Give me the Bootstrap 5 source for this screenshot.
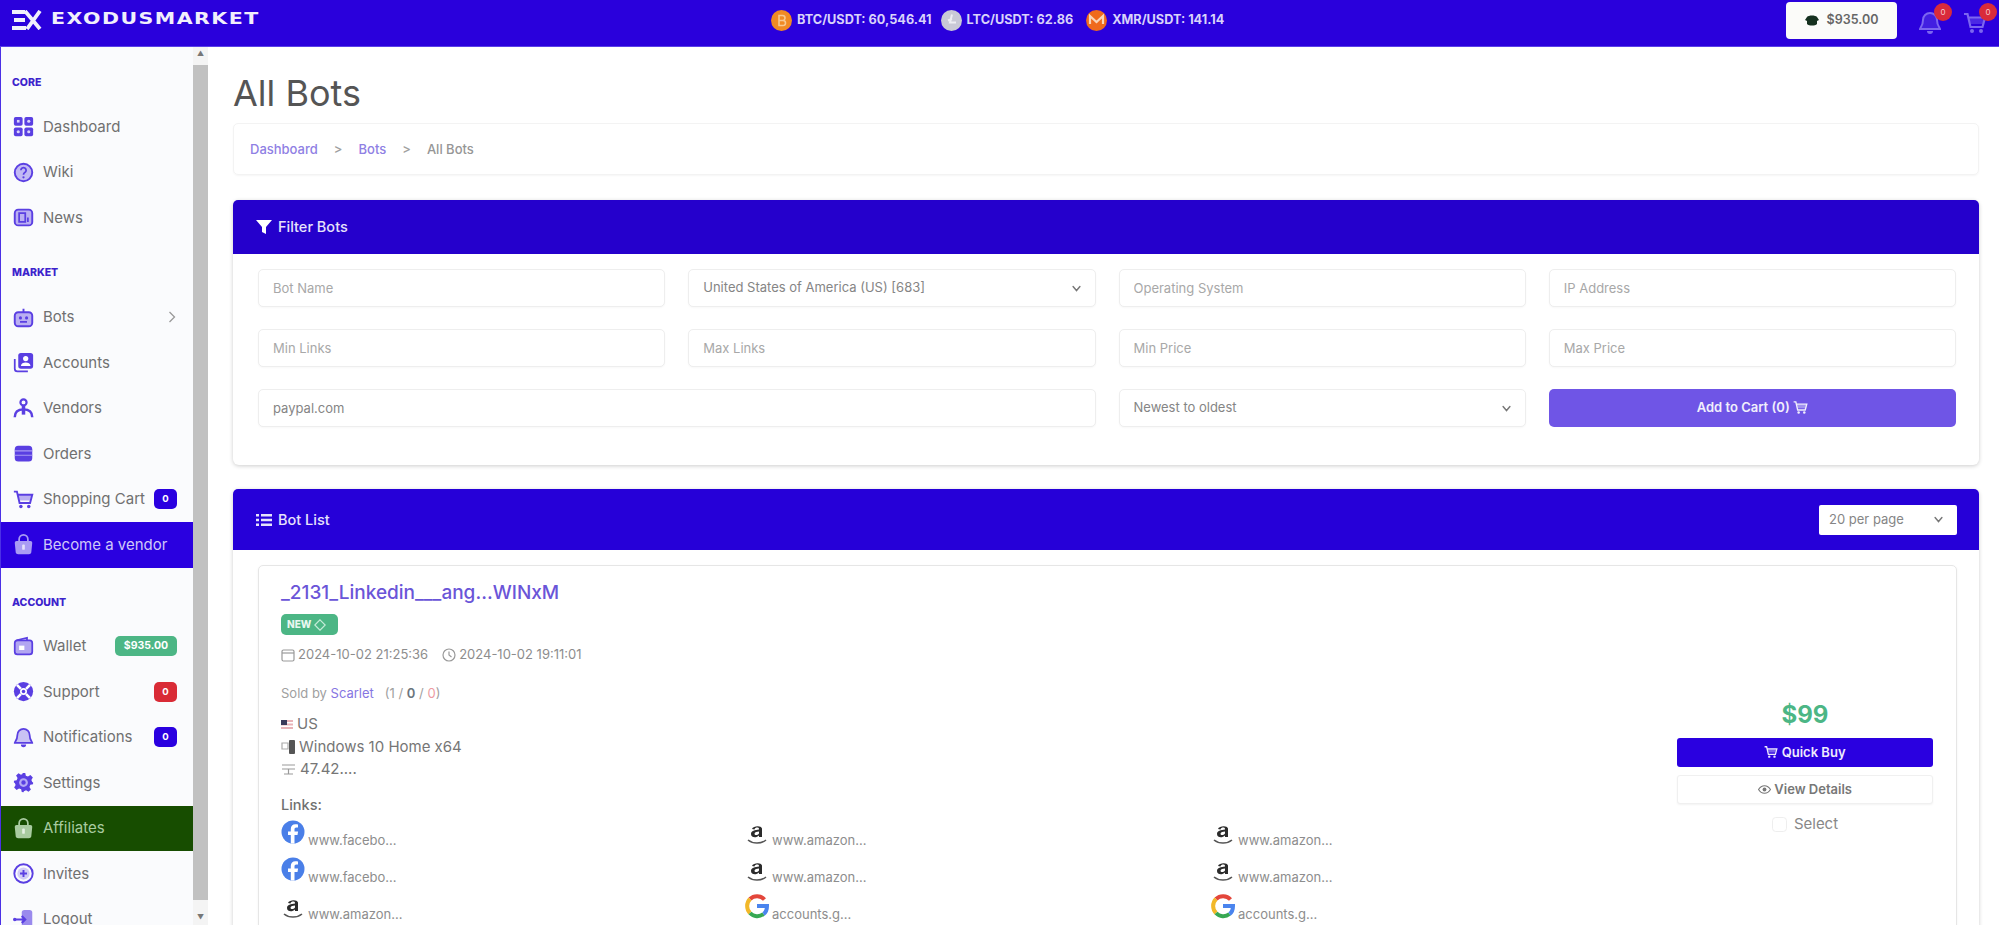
<!DOCTYPE html>
<html lang="en">
<head>
  <meta charset="UTF-8" />
  <meta name="viewport" content="width=device-width, initial-scale=1" />
  <title>All Bots</title>
  <link href="https://cdn.jsdelivr.net/npm/bootstrap@5.3.0/dist/css/bootstrap.min.css" rel="stylesheet" />
  <style>
    html, body { height: 100%; }
    body {
      background: #fff;
      color: #666;
      font-family: Inter, "Liberation Sans", sans-serif;
      overflow: hidden;
    }
    /* top bar */
    .top-bar {
      background: #2a00dc;
      height: 47px;
      padding: 0 12px 6px 11px;
      border-bottom: 1px solid #5a40e8;
      flex-wrap: nowrap;
    }
    .logo-wrap { width: 265px; color: #f1effc; }
    .logo-word {
      font-family: "DejaVu Sans", sans-serif;
      font-weight: 700;
      font-size: 15.5px;
      letter-spacing: 1.1px;
      transform: scaleX(1.325);
      transform-origin: left center;
      margin-left: 8px;
      white-space: nowrap;
    }
    .ticker-wrap { margin-left: 495px; width: 480px; color: #d9d3fa; font-size: 12.7px; font-weight: 700; }
    .ticker-wrap svg { margin-right: 5px; flex: none; }
    .ticker-item { white-space: nowrap; margin-right: 9px; }
    .ticker-item.ticker-mid { margin-right: 13px; }
    .balance-btn {
      margin-left: auto;
      width: 111px;
      height: 37px;
      background: #fbfbf9;
      border: 0;
      border-radius: 4px;
      color: #666;
      font-size: 12.5px;
      font-weight: 600;
      --bs-btn-padding-x: 0;
    }
    .top-icon { width: 24px; height: 24px; margin: 3px 0 0 21px; color: #7c66f0; }
    .top-badge {
      top: -7px;
      right: -10px;
      width: 18px;
      height: 18px;
      background: #d92b3a;
      color: #f6c9cd;
      border-radius: 50%;
      font-size: 8px;
      line-height: 18px;
      text-align: center;
    }
    /* sidebar */
    .app-body { height: calc(100vh - 47px); }
    .side-wrap { width: 208px; flex: none; border-left: 1px solid #4b30e6; overflow: hidden; }
    .side-nav { width: 192px; flex: none; background: #fafbfd; padding-top: 18px; }
    .side-title {
      font-size: 10.5px;
      font-weight: 800;
      color: #3c22cc;
      padding-left: 11px;
      line-height: 36px;
      height: 36px;
      margin-bottom: 3px;
    }
    .side-title.gap-market { margin-top: 14px; margin-bottom: 4px; }
    .side-title.gap-account { margin-top: 17px; margin-bottom: 3px; }
    .side-link {
      height: 45.5px;
      padding: 0 16px 0 12px;
      color: #707070;
      font-size: 15px;
      text-decoration: none;
    }
    .side-link svg.nav-ico { width: 21px; height: 21px; margin-right: 9px; flex: none; color: #5a3fe2; }
    .side-link.is-vendor { background: #2a00e0; color: #cfc8f8; }
    .side-link.is-vendor svg.nav-ico { color: #a99bf4; }
    .side-link.is-affil { background: #174d00; color: #a9cba0; }
    .side-link.is-affil svg.nav-ico { color: #a9cba0; }
    .side-badge {
      background: #2a00e0;
      color: #fff;
      font-size: 9.5px;
      width: 23px;
      height: 20px;
      line-height: 20px;
      padding: 0;
      border-radius: 5px;
    }
    .side-badge.badge-red { background: #d92b36; }
    .side-badge.badge-money { background: #4cb685; width: 62px; font-size: 10.5px; }
    .fake-scroll { width: 15px; flex: none; background: #f4f4f4; }
    .fake-scroll .thumb { background: #c1c1c1; height: 835px; margin-top: 4px; }
    .scroll-arrow { height: 14px; color: #777; font-size: 7px; line-height: 14px; text-align: center; }
    /* main */
    .main-pane { flex: 1; padding: 0 20px 0 25px; overflow: hidden; min-width: 0; }
    .page-heading { font-size: 36px; font-weight: 400; color: #555; margin: 24px 0 8px; line-height: 44px; }
    .crumb-box {
      height: 52px;
      padding: 2px 16px 0;
      border: 1px solid #f3f3f3;
      border-radius: 5px;
      font-size: 13px;
      --bs-breadcrumb-divider: '>';
      --bs-breadcrumb-divider-color: #a0a0a0;
      --bs-breadcrumb-item-active-color: #969696;
      --bs-breadcrumb-margin-bottom: 25px;
      --bs-breadcrumb-item-padding-x: 16px;
      box-shadow: 0 1px 2px rgba(0,0,0,.04);
      font-weight: 500;
    }
    .crumb-box a { color: #8f80e4; text-decoration: none; }
    .panel {
      border: 0;
      border-radius: 6px;
      box-shadow: 0 1px 4px rgba(0,0,0,.2);
      margin-bottom: 24px;
    }
    .panel .card-header {
      background: #2500cc;
      color: #e6e2fb;
      border: 0;
      font-size: 14.5px;
      font-weight: 500;
      height: 54px;
      padding: 0 23px;
    }
    .panel .card-header svg { margin-right: 6px; }
    .panel.list-panel .card-header { background: #2600d8; height: 61px; padding-right: 22px; }
    .filter-body { padding: 15px 23px 38px 25px; }
    .filter-grid { --bs-gutter-x: 23px; --bs-gutter-y: 22px; }
    .field {
      height: 38px;
      font-size: 13px;
      color: #858585;
      border-color: #eee;
      border-radius: 5px;
      padding-left: 14px;
      box-shadow: 0 1px 2px rgba(0,0,0,.03);
    }
    .field::placeholder { color: #a8a8a8; }
    .form-select.field, .form-select.per-page {
      background-image: url("data:image/svg+xml,%3csvg xmlns='http://www.w3.org/2000/svg' viewBox='0 0 16 16'%3e%3cpath fill='none' stroke='%23777' stroke-linecap='round' stroke-width='2' d='m3 5 5 6 5-6'/%3e%3c/svg%3e");
      background-size: 13px 11px;
    }
    .add-cart {
      height: 38px;
      background: #6f55e6;
      color: #f1effc;
      font-size: 13px;
      font-weight: 600;
      border: 0;
      border-radius: 5px;
    }
    .per-page {
      width: 138px;
      height: 30px;
      font-size: 13px;
      color: #858585;
      border: 0;
      border-radius: 2px;
      padding: 0 0 0 10px;
    }
    .list-body { padding: 15px 22px 0 25px; }
    .bot-row {
      border: 1px solid #e6e6e6;
      border-radius: 5px;
      padding: 12px 23px 0 22px;
      box-shadow: 0 1px 3px rgba(0,0,0,.05);
    }
    .bot-name { font-size: 19px; font-weight: 500; color: #6a55d8; text-decoration: none; line-height: 30px; display: block; }
    .new-tag {
      background: #4cb685;
      color: #e9f7f0;
      font-size: 10px;
      font-weight: 800;
      border-radius: 5px;
      padding: 0 6px;
      height: 21px;
      width: 57px;
      margin-top: 6px;
      gap: 3px;
    }
    .date-line { font-size: 13px; color: #8d8d8d; margin-top: 10px; line-height: 19px; }
    .date-line svg { margin-right: 3px; }
    .date-line .date-b { margin-left: 14px; }
    .sold-line { font-size: 13px; color: #a0a0a0; margin-top: 20px; line-height: 18px; }
    .sold-line a { color: #8676e2; text-decoration: none; }
    .spec-list { font-size: 15px; color: #767676; margin-top: 11px; }
    .spec-list > div { height: 22.5px; }
    .spec-list svg { margin-right: 4px; flex: none; }
    .links-label { font-size: 14.5px; font-weight: 500; color: #707070; margin-top: 13px; line-height: 22px; }
    .link-grid { display: grid; grid-template-columns: 464px 466px 466px; grid-auto-rows: 37px; margin-top: 3px; }
    .link-cell { font-size: 13px; color: #8d8d8d; align-items: flex-end; padding-bottom: 5px; white-space: nowrap; }
    .link-cell svg { width: 24px; height: 26px; margin-right: 3px; margin-bottom: 5px; flex: none; }
    .buy-col { width: 256px; flex: none; margin: 120px 0 0; text-align: center; }
    .price-tag { font-size: 24px; font-weight: 700; color: #4cb685; line-height: 34px; }
    .quick-btn {
      background: #2a00e0;
      color: #eeeafd;
      border: 0;
      height: 29px;
      width: 100%;
      font-size: 13px;
      font-weight: 600;
      padding: 0;
      border-radius: 3px;
      margin-top: 6px;
    }
    .detail-btn {
      background: #fff;
      color: #777;
      border: 1px solid #f0f0f0;
      height: 29px;
      width: 100%;
      font-size: 13px;
      font-weight: 600;
      padding: 0;
      border-radius: 3px;
      margin-top: 8px;
      box-shadow: 0 1px 2px rgba(0,0,0,.05);
    }
    .pick-line { font-size: 15px; color: #888; margin: 9px 0 0; padding: 0; gap: 7px; min-height: 0; }
    .pick-line .form-check-input { margin: 0; width: 15px; height: 15px; float: none; border-color: #eee; }
  </style>
</head>
<body>

  <svg width="0" height="0" class="position-absolute">
    <symbol id="ic-dash" viewBox="0 0 24 24"><rect x="1" y="1" width="10" height="10" rx="2" fill="currentColor"/><rect x="13" y="1" width="10" height="10" rx="2" fill="currentColor"/><rect x="1" y="13" width="10" height="10" rx="2" fill="currentColor"/><rect x="13" y="13" width="10" height="10" rx="2" fill="currentColor"/><rect x="4.500" y="4.500" width="3" height="3" fill="#d9d3fa"/><circle cx="18" cy="6" r="1.800" fill="#d9d3fa"/><circle cx="6" cy="18" r="1.800" fill="#d9d3fa"/><circle cx="18" cy="18" r="1.800" fill="#d9d3fa"/></symbol>
    <symbol id="ic-help" viewBox="0 0 24 24"><circle cx="12" cy="12" r="10" fill="currentColor" opacity=".35"/><circle cx="12" cy="12" r="10" fill="none" stroke="currentColor" stroke-width="2.200"/><path d="M9 9.500a3 3 0 1 1 4.500 2.600c-1 .6-1.500 1.200-1.500 2.400" fill="none" stroke="currentColor" stroke-width="2"/><circle cx="12" cy="17.500" r="1.300" fill="currentColor"/></symbol>
    <symbol id="ic-news" viewBox="0 0 24 24"><rect x="2" y="3" width="20" height="18" rx="4" fill="currentColor" opacity=".4"/><rect x="2" y="3" width="20" height="18" rx="4" fill="none" stroke="currentColor" stroke-width="2.200"/><path d="M7 7h7v10H7zM17 12v5" fill="none" stroke="currentColor" stroke-width="2"/></symbol>
    <symbol id="ic-bot" viewBox="0 0 24 24"><rect x="2" y="6" width="20" height="16" rx="4" fill="currentColor" opacity=".4"/><rect x="2" y="6" width="20" height="16" rx="4" fill="none" stroke="currentColor" stroke-width="2.200"/><path d="M12 6V2" stroke="currentColor" stroke-width="2.200"/><circle cx="8.500" cy="12.500" r="1.800" fill="currentColor"/><circle cx="15.500" cy="12.500" r="1.800" fill="currentColor"/><path d="M8 17h8" stroke="currentColor" stroke-width="2"/></symbol>
    <symbol id="ic-acct" viewBox="0 0 24 24"><path d="M2 8v11a3 3 0 0 0 3 3h12" fill="none" stroke="currentColor" stroke-width="2"/><rect x="6" y="1" width="17" height="18" rx="3" fill="currentColor"/><circle cx="14.500" cy="7.500" r="3" fill="#fff"/><path d="M9 16c.5-3 2.500-4 5.500-4s5 1 5.500 4z" fill="#fff"/></symbol>
    <symbol id="ic-vendor" viewBox="0 0 24 24"><circle cx="12" cy="5" r="3.500" fill="none" stroke="currentColor" stroke-width="2.500"/><path d="M12 9v10" stroke="currentColor" stroke-width="4"/><path d="M2 22c0-6 3-9 10-9s10 3 10 9" fill="none" stroke="currentColor" stroke-width="2.800"/></symbol>
    <symbol id="ic-orders" viewBox="0 0 24 24"><rect x="2" y="3" width="20" height="18" rx="4" fill="currentColor"/><path d="M2 9h20M2 14h20" stroke="#a99bf4" stroke-width="1.200"/></symbol>
    <symbol id="ic-cart" viewBox="0 0 24 24"><path d="M1 3h3.500l3 13h12l2.500-9.500H6" fill="none" stroke="currentColor" stroke-width="2.200"/><path d="M6 7h15l-1.500 6H7.500z" fill="currentColor" opacity=".4"/><circle cx="9" cy="20" r="2" fill="currentColor"/><circle cx="18" cy="20" r="2" fill="currentColor"/></symbol>
    <symbol id="ic-bag" viewBox="0 0 24 24"><path d="M7 8V6a5 5 0 0 1 10 0v2" fill="none" stroke="currentColor" stroke-width="2"/><path d="M4 8h16a2 2 0 0 1 2 2l-1 10a3 3 0 0 1-3 3H6a3 3 0 0 1-3-3L2 10a2 2 0 0 1 2-2z" fill="currentColor"/><rect x="10.500" y="12" width="3" height="6" rx="1" fill="#fff" opacity=".7"/></symbol>
    <symbol id="ic-wallet" viewBox="0 0 24 24"><rect x="2" y="5" width="20" height="16" rx="3" fill="currentColor" opacity=".45"/><rect x="2" y="5" width="20" height="16" rx="3" fill="none" stroke="currentColor" stroke-width="2"/><path d="M4 5l12-3v3" fill="none" stroke="currentColor" stroke-width="2"/><path d="M7 11h6v5H7z" fill="#fff"/></symbol>
    <symbol id="ic-support" viewBox="0 0 24 24"><circle cx="12" cy="12" r="11" fill="currentColor"/><circle cx="12" cy="12" r="4" fill="#fff"/><circle cx="12" cy="12" r="2" fill="currentColor"/><path d="M4.500 4.500l4.500 4.500M19.500 4.500L15 9M4.500 19.500L9 15M19.500 19.500L15 15" stroke="#fff" stroke-width="3"/></symbol>
    <symbol id="ic-bell" viewBox="0 0 24 24"><path d="M12 2a7 7 0 0 0-7 7c0 6-3 8-3 9h20c0-1-3-3-3-9a7 7 0 0 0-7-7z" fill="currentColor" opacity=".3"/><path d="M12 2a7 7 0 0 0-7 7c0 6-3 8-3 9h20c0-1-3-3-3-9a7 7 0 0 0-7-7z" fill="none" stroke="currentColor" stroke-width="2"/><path d="M9 20a3 3 0 0 0 6 0z" fill="currentColor"/></symbol>
    <symbol id="ic-gear" viewBox="0 0 24 24"><path d="M10 1h4l.7 3.200 2.400 1 2.800-1.700 2.800 2.800-1.700 2.800 1 2.400L23 12l-.1 2-3.100.7-1 2.400 1.700 2.800-2.800 2.800-2.800-1.700-2.400 1L12 23l-2-.1-.7-3.100-2.400-1-2.800 1.700-2.800-2.800 1.700-2.800-1-2.400L1 12l.1-2 3.100-.7 1-2.400-1.700-2.800 2.800-2.800 2.800 1.700 2.400-1z" fill="currentColor"/><circle cx="12" cy="12" r="5" fill="#b5a9f5"/><circle cx="12" cy="12" r="2.500" fill="currentColor"/></symbol>
    <symbol id="ic-plus" viewBox="0 0 24 24"><circle cx="12" cy="12" r="10.500" fill="none" stroke="currentColor" stroke-width="2.200"/><circle cx="12" cy="12" r="7" fill="currentColor" opacity=".25"/><path d="M12 8v8M8 12h8" stroke="currentColor" stroke-width="2.200"/></symbol>
    <symbol id="ic-logout" viewBox="0 0 24 24"><rect x="10" y="1" width="12" height="22" rx="3" fill="currentColor" opacity=".6"/><path d="M1 12h13M10 8l4 4-4 4" fill="none" stroke="currentColor" stroke-width="2.400"/><circle cx="2" cy="12" r="2" fill="currentColor"/></symbol>
    <symbol id="ic-fb" viewBox="0 0 24 26"><circle cx="12" cy="12" r="11.500" fill="#4a7fe8"/><path d="M13.500 23.500V15h3l.6-3.500h-3.600V9.300c0-1 .5-1.900 2-1.900H17V4.500c-.8-.1-1.700-.2-2.600-.2-2.800 0-4.600 1.700-4.600 4.700v2.500H7V15h2.800v8.500z" fill="#fff"/></symbol>
    <symbol id="ic-goog" viewBox="0 0 24 26"><path d="M19.500 5.500A10 10 0 0 0 5 5" fill="none" stroke="#e3463b" stroke-width="4"/><path d="M5 5a10 10 0 0 0 0 14" fill="none" stroke="#f2b829" stroke-width="4"/><path d="M5 19a10 10 0 0 0 13.500 1" fill="none" stroke="#37a853" stroke-width="4"/><path d="M12 12h10c0 3.500-1 6.300-3.500 8" fill="none" stroke="#4a84ee" stroke-width="4"/></symbol>
    <symbol id="ic-smile" viewBox="0 0 24 26"><path d="M3 20c5 4 13 4 18 0" fill="none" stroke="#555" stroke-width="1.600"/><path d="M7 9c1-3 9-4 10-.5V17h-3v-1.500c-3 3-8 2-8-1.500 0-3.500 4-4 8-4.500V9c0-2-4-2-4.500.5zM14 11.500c-2 .3-4.500.6-4.500 2.300 0 1.700 3 1.700 4.500-.3z" fill="#2b2b2b"/></symbol>
    <symbol id="ic-eye" viewBox="0 0 24 24"><path d="M1 12c3-5 7-7 11-7s8 2 11 7c-3 5-7 7-11 7s-8-2-11-7z" fill="none" stroke="currentColor" stroke-width="2"/><circle cx="12" cy="12" r="3.500" fill="currentColor"/></symbol>
  </svg>

  <nav class="navbar top-bar align-items-center justify-content-start">
    <div class="logo-wrap d-flex align-items-center">
      <svg width="32" height="20" viewBox="0 0 32 20" fill="none" stroke="currentColor" stroke-width="3.800"><path d="M1 2h13M3 10h11M1 18h14"/><path d="M14 1l15 18M29 1L16 19"/></svg>
      <span class="logo-word">EXODUSMARKET</span>
    </div>
    <div class="ticker-wrap d-flex align-items-center">
      <svg width="21" height="21" viewBox="0 0 21 21"><circle cx="10.500" cy="10.500" r="10.500" fill="#f08a24"/><path d="M8 5.500h3.500a2.500 2.500 0 0 1 0 5H8zM8 10.500h4a2.500 2.500 0 0 1 0 5H8z" fill="none" stroke="#f7c88f" stroke-width="1.600"/></svg>
      <span class="ticker-item">BTC/USDT: 60,546.41</span>
      <svg width="21" height="21" viewBox="0 0 21 21"><circle cx="10.500" cy="10.500" r="10.500" fill="#c9c9d6"/><path d="M11 4.500l-2 8h6M7 10.500l4-1.500" fill="none" stroke="#eeeef3" stroke-width="2"/></svg>
      <span class="ticker-item ticker-mid">LTC/USDT: 62.86</span>
      <svg width="21" height="21" viewBox="0 0 21 21"><circle cx="10.500" cy="10.500" r="10.500" fill="#ef6a1c"/><path d="M4 14V6l6.500 6L17 6v8" fill="none" stroke="#f8d5b8" stroke-width="2.200"/></svg>
      <span class="ticker-item">XMR/USDT: 141.14</span>
    </div>
    <button class="btn balance-btn d-flex align-items-center justify-content-center" type="button">
      <svg class="me-2" width="14" height="11" viewBox="0 0 14 11"><path d="M2 2c1.500-2 8.500-2 10 0l2 3-2 1v3c-2 2-8 2-10 0V6L0 5z" fill="#15301f"/></svg>
      $935.00
    </button>
    <span class="top-icon position-relative"><svg width="24" height="24"><use href="#ic-bell"/></svg><span class="top-badge position-absolute">0</span></span>
    <span class="top-icon position-relative"><svg width="24" height="24"><use href="#ic-cart"/></svg><span class="top-badge position-absolute">0</span></span>
  </nav>

  <div class="app-body d-flex">
    <aside class="side-wrap d-flex">
      <div class="side-nav">
        <div class="side-title">CORE</div>
        <a class="side-link d-flex align-items-center" href="#"><svg class="nav-ico"><use href="#ic-dash"/></svg>Dashboard</a>
        <a class="side-link d-flex align-items-center" href="#"><svg class="nav-ico"><use href="#ic-help"/></svg>Wiki</a>
        <a class="side-link d-flex align-items-center" href="#"><svg class="nav-ico"><use href="#ic-news"/></svg>News</a>
        <div class="side-title gap-market">MARKET</div>
        <a class="side-link d-flex align-items-center" href="#"><svg class="nav-ico"><use href="#ic-bot"/></svg>Bots
          <svg class="ms-auto" width="9" height="12" viewBox="0 0 9 12" fill="none" stroke="#999" stroke-width="1.300"><path d="M1.500 1l5 5-5 5"/></svg></a>
        <a class="side-link d-flex align-items-center" href="#"><svg class="nav-ico"><use href="#ic-acct"/></svg>Accounts</a>
        <a class="side-link d-flex align-items-center" href="#"><svg class="nav-ico"><use href="#ic-vendor"/></svg>Vendors</a>
        <a class="side-link d-flex align-items-center" href="#"><svg class="nav-ico"><use href="#ic-orders"/></svg>Orders</a>
        <a class="side-link d-flex align-items-center" href="#"><svg class="nav-ico"><use href="#ic-cart"/></svg>Shopping Cart<span class="badge side-badge ms-auto">0</span></a>
        <a class="side-link is-vendor d-flex align-items-center" href="#"><svg class="nav-ico"><use href="#ic-bag"/></svg>Become a vendor</a>
        <div class="side-title gap-account">ACCOUNT</div>
        <a class="side-link d-flex align-items-center" href="#"><svg class="nav-ico"><use href="#ic-wallet"/></svg>Wallet<span class="badge side-badge badge-money ms-auto">$935.00</span></a>
        <a class="side-link d-flex align-items-center" href="#"><svg class="nav-ico"><use href="#ic-support"/></svg>Support<span class="badge side-badge badge-red ms-auto">0</span></a>
        <a class="side-link d-flex align-items-center" href="#"><svg class="nav-ico"><use href="#ic-bell"/></svg>Notifications<span class="badge side-badge ms-auto">0</span></a>
        <a class="side-link d-flex align-items-center" href="#"><svg class="nav-ico"><use href="#ic-gear"/></svg>Settings</a>
        <a class="side-link is-affil d-flex align-items-center" href="#"><svg class="nav-ico"><use href="#ic-bag"/></svg>Affiliates</a>
        <a class="side-link d-flex align-items-center" href="#"><svg class="nav-ico"><use href="#ic-plus"/></svg>Invites</a>
        <a class="side-link d-flex align-items-center" href="#"><svg class="nav-ico"><use href="#ic-logout"/></svg>Logout</a>
      </div>
      <div class="fake-scroll d-flex flex-column">
        <div class="scroll-arrow">&#9650;</div>
        <div class="thumb"></div>
        <div class="scroll-arrow mt-auto">&#9660;</div>
      </div>
    </aside>

    <main class="main-pane">
      <h1 class="page-heading">All Bots</h1>
      <ol class="breadcrumb crumb-box align-items-center">
        <li class="breadcrumb-item"><a href="#">Dashboard</a></li>
        <li class="breadcrumb-item"><a href="#">Bots</a></li>
        <li class="breadcrumb-item active">All Bots</li>
      </ol>

      <div class="card panel">
        <div class="card-header d-flex align-items-center">
          <svg width="16" height="14" viewBox="0 0 16 14"><path d="M0 0h16l-6 7v7l-4-2V7z" fill="#fff"/></svg>
          Filter Bots
        </div>
        <div class="card-body filter-body">
          <div class="row filter-grid">
            <div class="col-3"><input class="form-control field" placeholder="Bot Name" /></div>
            <div class="col-3"><select class="form-select field"><option>United States of America (US) [683]</option></select></div>
            <div class="col-3"><input class="form-control field" placeholder="Operating System" /></div>
            <div class="col-3"><input class="form-control field" placeholder="IP Address" /></div>
            <div class="col-3"><input class="form-control field" placeholder="Min Links" /></div>
            <div class="col-3"><input class="form-control field" placeholder="Max Links" /></div>
            <div class="col-3"><input class="form-control field" placeholder="Min Price" /></div>
            <div class="col-3"><input class="form-control field" placeholder="Max Price" /></div>
            <div class="col-6"><input class="form-control field" value="paypal.com" /></div>
            <div class="col-3"><select class="form-select field"><option>Newest to oldest</option></select></div>
            <div class="col-3"><button class="btn add-cart w-100" type="button">Add to Cart (0)
              <svg width="15" height="15" style="vertical-align:-3px;margin:0"><use href="#ic-cart"/></svg></button></div>
          </div>
        </div>
      </div>

      <div class="card panel list-panel">
        <div class="card-header d-flex align-items-center justify-content-between">
          <span class="d-flex align-items-center">
            <svg width="16" height="14" viewBox="0 0 16 14" fill="#e6e2fb"><path d="M0 1h3v2.500H0zM5 1h11v2.500H5zM0 5.800h3v2.500H0zM5 5.800h11v2.500H5zM0 10.500h3V13H0zM5 10.500h11V13H5z"/></svg>
            Bot List
          </span>
          <select class="form-select per-page"><option>20 per page</option></select>
        </div>
        <div class="card-body list-body">
          <div class="bot-row d-flex">
            <div class="flex-grow-1">
              <a class="bot-name" href="#">_2131_Linkedin___ang...WINxM</a>
              <div class="new-tag d-flex align-items-center">NEW
                <svg width="12" height="12" viewBox="0 0 12 12" fill="none" stroke="#c5ecd9" stroke-width="1.200"><path d="M6 .8L11.200 6 6 11.200.8 6z"/></svg></div>
              <div class="date-line d-flex align-items-center">
                <svg width="14" height="14" viewBox="0 0 14 14" fill="none" stroke="#999" stroke-width="1.200"><rect x="1" y="2" width="12" height="11" rx="1.500"/><path d="M1 5h12"/></svg>2024-10-02 21:25:36
                <svg class="date-b" width="14" height="14" viewBox="0 0 14 14" fill="none" stroke="#999" stroke-width="1.200"><circle cx="7" cy="7" r="6"/><path d="M7 3.500V7l2.500 2"/></svg>2024-10-02 19:11:01
              </div>
              <div class="sold-line">Sold by <a href="#">Scarlet</a> &nbsp; (1 / <b class="fw-semibold text-secondary">0</b> / <span class="text-danger opacity-50">0</span>)</div>
              <div class="spec-list">
                <div class="d-flex align-items-center"><svg width="12" height="9" viewBox="0 0 12 9"><rect width="12" height="9" fill="#e9b3b8"/><rect y="2" width="12" height="1.500" fill="#fff"/><rect y="5.500" width="12" height="1.500" fill="#fff"/><rect width="6" height="5" fill="#3a3a5a"/></svg>US</div>
                <div class="d-flex align-items-center"><svg width="16" height="14" viewBox="0 0 16 14" style="margin-right:2px"><path d="M1 3h6v6H1z" fill="none" stroke="#aaa" stroke-width="1.200"/><rect x="8" y="0" width="6" height="14" rx="1" fill="#555"/></svg>Windows 10 Home x64</div>
                <div class="d-flex align-items-center"><svg width="15" height="13" viewBox="0 0 15 13" fill="none" stroke="#999" stroke-width="1.200"><path d="M1 2h13M1 6h13M7.500 6v5M3 11h9"/></svg>47.42....</div>
              </div>
              <div class="links-label">Links:</div>
              <div class="link-grid">
                <div class="link-cell d-flex"><svg><use href="#ic-fb"/></svg>www.facebo...</div>
                <div class="link-cell d-flex"><svg><use href="#ic-smile"/></svg>www.amazon...</div>
                <div class="link-cell d-flex"><svg><use href="#ic-smile"/></svg>www.amazon...</div>
                <div class="link-cell d-flex"><svg><use href="#ic-fb"/></svg>www.facebo...</div>
                <div class="link-cell d-flex"><svg><use href="#ic-smile"/></svg>www.amazon...</div>
                <div class="link-cell d-flex"><svg><use href="#ic-smile"/></svg>www.amazon...</div>
                <div class="link-cell d-flex"><svg><use href="#ic-smile"/></svg>www.amazon...</div>
                <div class="link-cell d-flex"><svg><use href="#ic-goog"/></svg>accounts.g...</div>
                <div class="link-cell d-flex"><svg><use href="#ic-goog"/></svg>accounts.g...</div>
              </div>
            </div>
            <div class="buy-col">
              <div class="price-tag">$99</div>
              <button class="btn quick-btn" type="button"><svg width="14" height="14" style="vertical-align:-2px"><use href="#ic-cart"/></svg> Quick Buy</button>
              <button class="btn detail-btn" type="button"><svg width="13" height="13" style="vertical-align:-2px"><use href="#ic-eye"/></svg> View Details</button>
              <div class="form-check pick-line d-flex align-items-center justify-content-center">
                <input class="form-check-input" type="checkbox" id="pick1" />
                <label class="form-check-label" for="pick1">Select</label>
              </div>
            </div>
          </div>
        </div>
      </div>
    </main>
  </div>

  <script src="https://cdn.jsdelivr.net/npm/bootstrap@5.3.0/dist/js/bootstrap.bundle.min.js"></script>
</body>
</html>
